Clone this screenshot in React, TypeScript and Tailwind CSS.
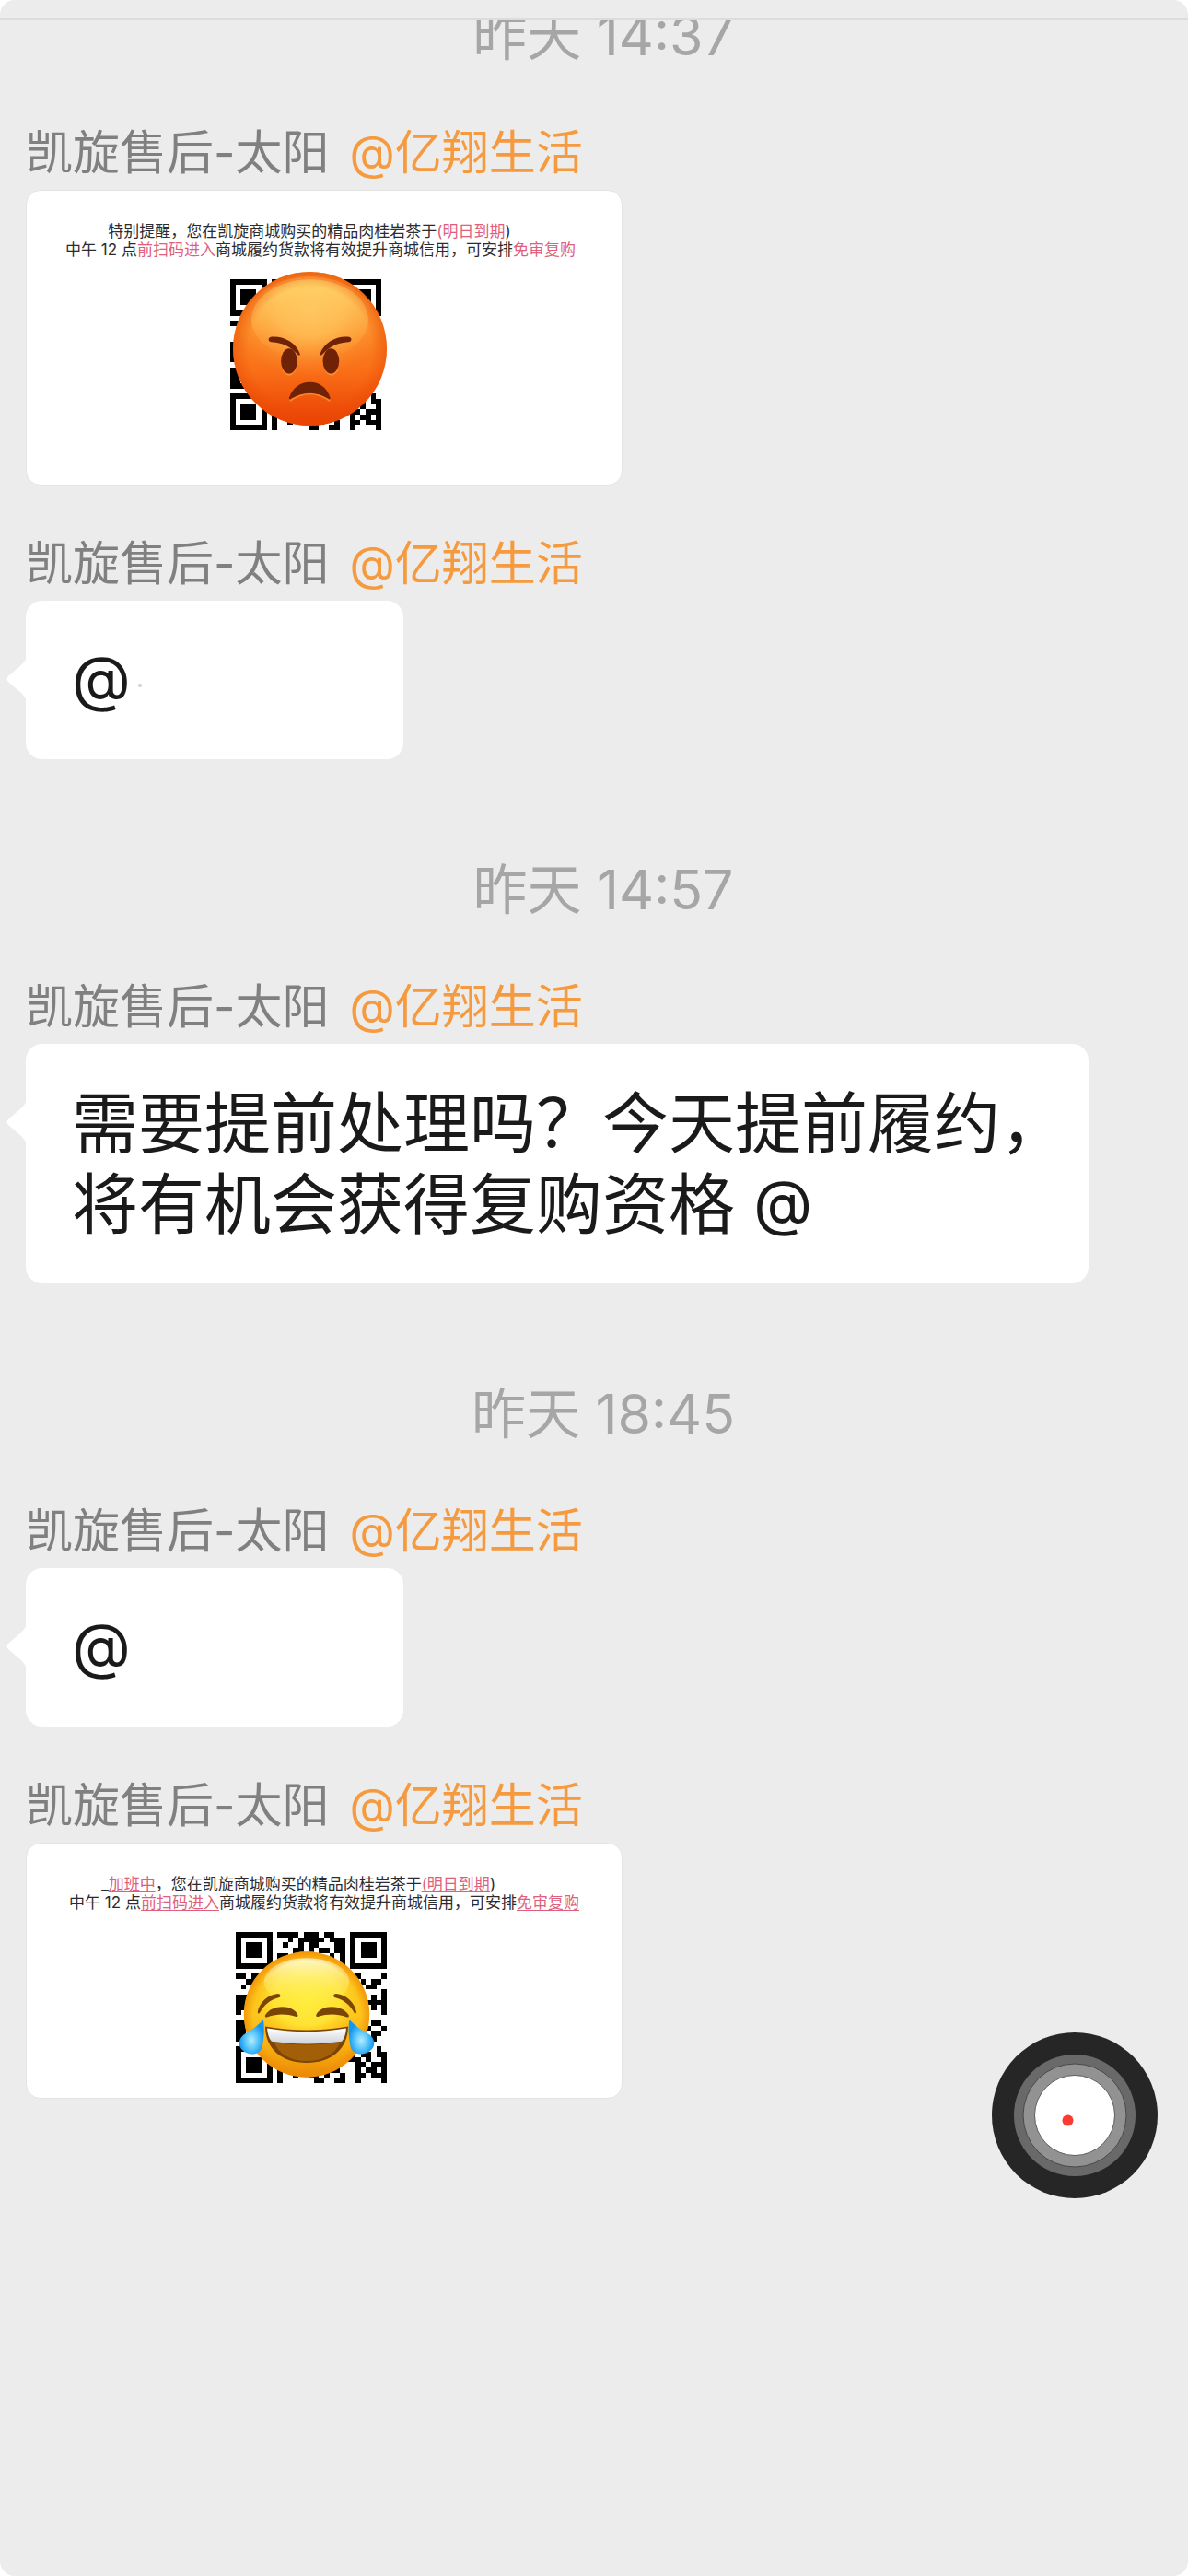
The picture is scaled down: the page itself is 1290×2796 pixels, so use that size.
import * as React from "react";
import { clsx } from "clsx";

// Version 3 code, the three 7x7 finder squares are drawn on top of these rows
const qrRows = [
  "........####.###.##..........",
  "..........#.#####.###........",
  ".........#..#.##...##........",
  "...........##.#.##.##........",
  "........##.#..##..#.#........",
  "........#.##.#..###.#........",
  "........#.#.#.#.#.#.#........",
  "........##..#..##............",
  "##.##.#..##.#.##.#..##.#....#",
  "..##.#.##..#.##.##.#..#.#.##.",
  ".#..#.##.#.#..#.##.##.#..##..",
  "...#.#..##.##.#..#.##..#....#",
  "###.##.#..#.##.#.##..#.##.#.#",
  "##.#..##.##..#.##.#.##.#.####",
  "##..#.#.#..##.#..#.##.#.#.#.#",
  "#.##.##..#.##.#.##..#.#.#...#",
  "..#.#..##.#..##.#.##..##.....",
  "###.##.#.##.#..#.##.#.#.#.##.",
  "####.#.##..#.##.#..##.#.##..#",
  "##.#..##.#.##..#.##.##..#.##.",
  "####.##..##.#.##..#.#.##..#..",
  "........#.##..#.##.##.#.#....",
  "........##.#.#..#.##..#.#..#.",
  ".........#..##.#.##.#.#.##.##",
  "........#.##.#.##..#####.#..#",
  "........#..#.#..##.#...##.###",
  "........#.#..##.#.##...#.##.#",
  "........#..#..##.#..#..##.###",
  "........#......##..##..#....#",
];

const tailClasses =
  "absolute top-[61px] -left-[21px] h-12 w-[22px] text-white";

function QrCode() {
  return (
    <svg
      viewBox="0 0 29 29"
      className="size-[164px]"
      shapeRendering="crispEdges"
      aria-hidden="true"
    >
      {qrRows.map((row, y) =>
        row
          .split("")
          .map((cell, x) =>
            cell === "#" ? (
              <rect key={`${x}-${y}`} x={x} y={y} width="1" height="1" />
            ) : null
          )
      )}
      {[
        [0, 0],
        [22, 0],
        [0, 22],
      ].map(([x, y]) => (
        <g key={`${x}-${y}`}>
          <rect x={x} y={y} width="7" height="7" />
          <rect x={x + 1} y={y + 1} width="5" height="5" fill="#fff" />
          <rect x={x + 2} y={y + 2} width="3" height="3" />
        </g>
      ))}
    </svg>
  );
}

function AngryFace({ className }: { className?: string }) {
  return (
    <svg viewBox="0 0 100 100" className={className} role="img">
      <defs>
        <linearGradient id="angry-base" x1="0" y1="0" x2="0" y2="1">
          <stop offset="0" stopColor="#f5801f" />
          <stop offset="0.35" stopColor="#fb8a24" />
          <stop offset="0.65" stopColor="#f96e17" />
          <stop offset="1" stopColor="#e93e02" />
        </linearGradient>
        <radialGradient id="angry-light" cx="0.5" cy="0.3" r="0.6">
          <stop offset="0" stopColor="#ffc663" />
          <stop offset="0.4" stopColor="#ffb44c" />
          <stop offset="1" stopColor="#fc8a2b" stopOpacity="0" />
        </radialGradient>
        <linearGradient id="angry-cap" x1="0" y1="0" x2="0" y2="1">
          <stop offset="0" stopColor="#ffd469" />
          <stop offset="1" stopColor="#ffb04a" stopOpacity="0" />
        </linearGradient>
        <radialGradient id="angry-edge" cx="0.5" cy="0.5" r="0.5">
          <stop offset="0.8" stopColor="#e94a05" stopOpacity="0" />
          <stop offset="1" stopColor="#e94a05" stopOpacity="0.5" />
        </radialGradient>
      </defs>
      <circle cx="50" cy="50" r="50" fill="url(#angry-base)" />
      <ellipse cx="50" cy="39" rx="45" ry="36" fill="url(#angry-light)" />
      <ellipse cx="50" cy="31" rx="38" ry="26" fill="url(#angry-cap)" />
      <circle cx="50" cy="50" r="50" fill="url(#angry-edge)" />
      <g fill="none" stroke="#ff9a3c" strokeWidth="1" opacity="0.7">
        <path d="M37 84Q50 74.500 63 84" />
        <path d="M32 63Q36.500 71 41 63M59.500 63Q64 71 68.500 63" />
      </g>
      <g fill="#6f2206">
        <ellipse cx="36.500" cy="58" rx="5.300" ry="8.200" />
        <ellipse cx="63.700" cy="58" rx="5.300" ry="8.200" />
        <path d="M24.600 42.300C33 41.500 41 46 43.600 53.400C43.700 54.200 43 54.600 42.300 53.900C37.500 48.700 32 46 25 45.700C22.500 45.300 22.700 42.700 24.600 42.300Z" />
        <path d="M75.500 42.300C67 41.500 59.200 46 56.600 53.400C56.500 54.200 57.200 54.600 57.900 53.900C62.700 48.700 68 46 75.100 45.700C77.600 45.300 77.400 42.700 75.500 42.300Z" />
        <path d="M36.500 81.800C39 75 44 71.700 50 71.700C56 71.700 61 75 63.200 81.800C63.400 82.800 62.600 83.100 62 82.500C54 77.600 46 77.600 37.700 82.500C37 83.100 36.200 82.800 36.500 81.800Z" />
      </g>
    </svg>
  );
}

function JoyFace({ className }: { className?: string }) {
  return (
    <svg viewBox="-5 0 110 100" className={className} role="img">
      <defs>
        <linearGradient id="joy-base" x1="0" y1="0" x2="0" y2="1">
          <stop offset="0" stopColor="#fbb80e" />
          <stop offset="0.5" stopColor="#fdc61c" />
          <stop offset="0.75" stopColor="#fbae10" />
          <stop offset="1" stopColor="#e98c07" />
        </linearGradient>
        <radialGradient id="joy-light" cx="0.5" cy="0.5" r="0.5">
          <stop offset="0" stopColor="#ffee3d" />
          <stop offset="0.6" stopColor="#ffe233" />
          <stop offset="1" stopColor="#fdc61c" stopOpacity="0" />
        </radialGradient>
        <linearGradient id="joy-cap" x1="0" y1="0" x2="0" y2="1">
          <stop offset="0" stopColor="#fffbd0" />
          <stop offset="1" stopColor="#ffee4a" stopOpacity="0" />
        </linearGradient>
        <radialGradient id="joy-edge" cx="0.5" cy="0.5" r="0.5">
          <stop offset="0.85" stopColor="#ef8a08" stopOpacity="0" />
          <stop offset="1" stopColor="#ef8a08" stopOpacity="0.75" />
        </radialGradient>
        <linearGradient id="joy-teeth" x1="0" y1="0" x2="0" y2="1">
          <stop offset="0" stopColor="#ffffff" />
          <stop offset="1" stopColor="#cfd2da" />
        </linearGradient>
        <radialGradient id="joy-tear" cx="0.5" cy="0.6" r="0.5">
          <stop offset="0" stopColor="#b5ecff" />
          <stop offset="0.5" stopColor="#5cc8fb" />
          <stop offset="1" stopColor="#1596ec" />
        </radialGradient>
      </defs>
      <circle cx="50" cy="50" r="50" fill="url(#joy-base)" />
      <ellipse cx="50" cy="37" rx="45" ry="36" fill="url(#joy-light)" />
      <ellipse cx="50" cy="24" rx="34" ry="19" fill="url(#joy-cap)" />
      <circle cx="50" cy="50" r="50" fill="url(#joy-edge)" />
      <g fill="#7a4505">
        <path d="M11 48C12 41 19 34 27 33.500C29.500 33.600 29.700 36 27.700 36.700C21 38.500 16.500 42 12.700 48.600C12 49.800 10.800 49.300 11 48Z" />
        <path d="M89.500 48C88.500 41 81.500 34 73.500 33.500C71 33.600 70.800 36 72.800 36.700C79.500 38.500 84 42 87.800 48.600C88.500 49.800 89.700 49.300 89.500 48Z" />
        <path d="M17 50.500C20 46 25 44 30.500 44C36.500 44 41.500 46.500 43 50.500C43 52 42 52 41 51.700C34 49.400 26 49.400 19 52C17.500 52.500 16.500 52 17 50.500Z" />
        <path d="M57.500 50.500C59 46.500 64 44 70 44C75.500 44 80.500 46 83.500 50.500C84 52 83 52.500 81.500 52C74.500 49.400 66.500 49.400 59.500 51.700C58.500 52 57.500 52 57.500 50.500Z" />
        <path d="M17 59.500C39 63.500 61 63.500 83 59.500C83 77 70 88.500 50 88.500C30 88.500 17 77 17 59.500Z" />
      </g>
      <path
        d="M24 72C40 75 60 75 77 72C72 82 63 87 50 87C37 87 28 82 24 72Z"
        fill="#a35f07"
      />
      <path
        d="M18.500 61C39 64.600 61 64.600 81.500 61C81.300 65 80 69 78 71.500C60 74 40 74 22 71.500C20 69 18.700 65 18.500 61Z"
        fill="url(#joy-teeth)"
      />
      <path
        d="M15.500 54C16.500 60 16.200 68 14.500 76C13 81 7.500 83 2 80.500C-5 77 -5.500 70.500 0 66C6 62.500 10.500 59.500 15.500 54Z"
        fill="url(#joy-tear)"
      />
      <path
        d="M84 54C83 60 83.300 68 85 76C86.500 81 92.500 83 98 80.500C105 77 105.500 70.500 100 66C94 62.500 89 59.500 84 54Z"
        fill="url(#joy-tear)"
      />
    </svg>
  );
}

function TimeLabel({ children, className }: React.ComponentProps<"p">) {
  return (
    <p
      className={clsx(
        "pl-5 text-center text-[59px] leading-[64px] text-[#a6a6a6]",
        className
      )}
    >
      {children}
    </p>
  );
}

interface MessageProps {
  className?: string;
  children: React.ReactNode;
}

function Message({ className, children }: MessageProps) {
  return (
    <article
      className={clsx("flex flex-col items-start gap-1.5 px-7", className)}
    >
      <h2 className="flex gap-[22px] text-[51px] leading-[68px] text-[#808080]">
        <span>凯旋售后-太阳</span>
        <span className="text-[#f59a3e]">@亿翔生活</span>
      </h2>
      {children}
    </article>
  );
}

interface BubbleProps {
  className?: string;
  children: React.ReactNode;
}

function Bubble({ className, children }: BubbleProps) {
  return (
    <div
      className={clsx(
        "relative rounded-[18px] bg-white py-[42px] pl-[50px] text-[72px] leading-[88px] text-[#1a1a1a]",
        className
      )}
    >
      <svg viewBox="0 0 22 48" className={tailClasses} aria-hidden="true">
        <path
          d="M22 0C21 3 19 6 16 9L3 20Q-2 24 3 28L16 39C19 42 21 45 22 48Z"
          fill="currentColor"
        />
      </svg>
      {children}
    </div>
  );
}

function AtSign() {
  return <span className="align-[4px] text-[66px] leading-none">@</span>;
}

function Mark({ children, underline }: { children: string; underline?: boolean }) {
  return (
    <span
      className={clsx(
        "text-[#e0607c]",
        underline && "underline decoration-1 underline-offset-2"
      )}
    >
      {children}
    </span>
  );
}

function PictureCard({ className, children }: BubbleProps) {
  return (
    <div
      className={clsx(
        "flex w-[648px] max-w-full flex-col items-center rounded-2xl border border-[#e4e4e4] bg-white pt-[34px] text-[17px] leading-5 whitespace-nowrap text-[#2b2b30]",
        className
      )}
    >
      {children}
    </div>
  );
}

export default function App() {
  return (
    <div className="bg-white">
      <main className="relative flex min-h-screen flex-col overflow-hidden rounded-2xl bg-[#ececec] font-['Inter','Noto_Sans_CJK_SC',sans-serif]">
        <header className="h-[22px] border-b-2 border-[#dcdcdc]" />
        <section className="flex flex-col overflow-hidden">
          <TimeLabel className="-mt-[15px]">昨天 14:37</TimeLabel>

          <Message className="mt-[61px]">
            <PictureCard className="pb-[59px]">
              <p className="pr-8">
                特别提醒，您在凯旋商城购买的精品肉桂岩茶于
                <Mark>(明日到期</Mark>)
              </p>
              <p className="pr-2">
                中午 12 点<Mark>前扫码进入</Mark>
                商城履约货款将有效提升商城信用，可安排
                <Mark>免审复购</Mark>
              </p>
              <div className="relative mt-[22px] mr-10">
                <QrCode />
                <AngryFace className="absolute -top-2 left-[3px] size-[167px]" />
              </div>
            </PictureCard>
          </Message>

          <Message className="mt-[51px]">
            <Bubble className="w-[410px]">
              <AtSign />
              <span className="ml-2 inline-block size-1 rounded-full bg-[#d0d0d0] align-middle" />
            </Bubble>
          </Message>

          <TimeLabel className="mt-[110px]">昨天 14:57</TimeLabel>

          <Message className="mt-[61px]">
            <Bubble className="pr-6">
              需要提前处理吗？今天提前履约，
              <br />
              将有机会获得复购资格 <AtSign />
            </Bubble>
          </Message>

          <TimeLabel className="mt-[110px]">昨天 18:45</TimeLabel>

          <Message className="mt-[61px]">
            <Bubble className="w-[410px]">
              <AtSign />
            </Bubble>
          </Message>

          <Message className="mt-[52px]">
            <PictureCard className="pb-4">
              <p className="pr-14">
                _<Mark underline>加班中</Mark>
                ，您在凯旋商城购买的精品肉桂岩茶于
                <Mark underline>(明日到期</Mark>)
              </p>
              <p>
                中午 12 点<Mark underline>前扫码进入</Mark>
                商城履约货款将有效提升商城信用，可安排
                <Mark underline>免审复购</Mark>
              </p>
              <div className="relative mt-[22px] mr-7">
                <QrCode />
                <JoyFace className="absolute top-[21px] left-[2px] h-[137px] w-[150px]" />
              </div>
            </PictureCard>
          </Message>
        </section>

        <button
          type="button"
          aria-label="AssistiveTouch"
          className="absolute right-[33px] bottom-[410px] size-[180px] rounded-full"
        >
          <svg viewBox="0 0 180 180" className="size-full" aria-hidden="true">
            <circle cx="90" cy="90" r="90" fill="#262626" />
            <circle cx="90" cy="90" r="66" fill="#696969" />
            <circle cx="90" cy="90" r="56" fill="#929292" stroke="#484848" />
            <circle cx="90" cy="90" r="43.500" fill="#fff" stroke="#5c5c5c" />
            <circle cx="82.500" cy="95.500" r="6" fill="#fb3a30" />
          </svg>
        </button>
      </main>
    </div>
  );
}
